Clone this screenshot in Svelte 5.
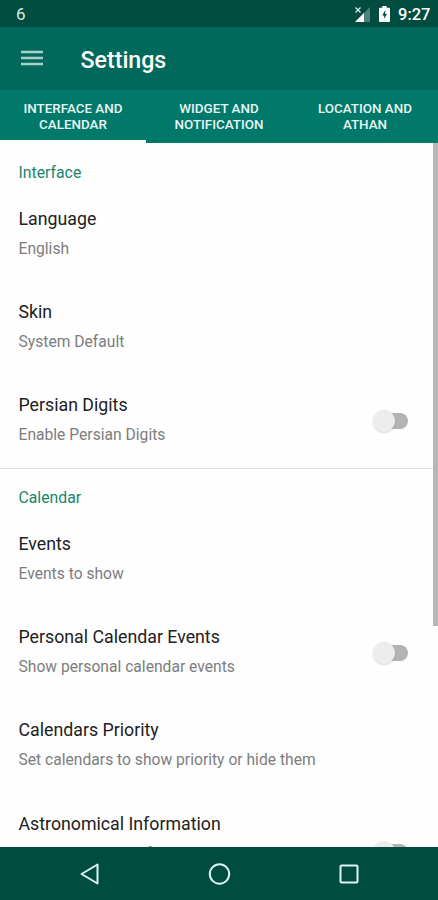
<script>
  const tabs = [['INTERFACE AND', 'CALENDAR'], ['WIDGET AND', 'NOTIFICATION'], ['LOCATION AND', 'ATHAN']];
  const sections = [
    {
      name: 'Interface',
      items: [
        { title: 'Language', summary: 'English' },
        { title: 'Skin', summary: 'System Default' },
        { title: 'Persian Digits', summary: 'Enable Persian Digits', toggle: true }
      ]
    },
    {
      name: 'Calendar',
      items: [
        { title: 'Events', summary: 'Events to show' },
        { title: 'Personal Calendar Events', summary: 'Show personal calendar events', toggle: true },
        { title: 'Calendars Priority', summary: 'Set calendars to show priority or hide them' },
        { title: 'Astronomical Information', summary: 'Show additional information like moon in Scorpio', toggle: true, tall: true }
      ]
    }
  ];
</script>

<div class="screen">
  <header class="status">
    <span class="count">6</span>
    <svg class="signal" width="17" height="17" viewBox="0 0 17 17">
      <path d="M16 1V16H1Z" fill="#4d8278" />
      <path d="M10 7V16H1Z" fill="#fff" />
      <path d="M1.5 1.5l5 5M6.5 1.5l-5 5" stroke="#dce8e5" stroke-width="1.3" />
    </svg>
    <svg class="battery" width="11" height="16" viewBox="0 0 11 16">
      <path d="M3.3 0h4.4v1.8H10q1 0 1 1V15q0 1-1 1H1q-1 0-1-1V2.800q0-1 1-1h2.300z" fill="#fff" />
      <path d="M6.300 4.300L3.200 9.500h2v3.400L7.900 7.900H6.300z" fill="#004d40" />
    </svg>
    <span class="clock">9:27</span>
  </header>

  <div class="appbar">
    <svg width="22" height="16" viewBox="0 0 22 16">
      <path d="M0 2H22M0 8H22M0 14H22" stroke="#a8d0c9" stroke-width="2.400" />
    </svg>
    <h1>Settings</h1>
  </div>

  <nav class="tabs">
    {#each tabs as tab, i}
      <div class="tab" class:active={i === 0}><span>{tab[0]}<br />{tab[1]}</span></div>
    {/each}
  </nav>

  <main>
    {#each sections as section}
      <section>
        <h2>{section.name}</h2>
        {#each section.items as item}
          <div class="row" class:tall={item.tall}>
            <div class="text">
              <div class="title">{item.title}</div>
              <div class="summary">{item.summary}</div>
            </div>
            {#if item.toggle}
              <div class="switch"><i></i></div>
            {/if}
          </div>
        {/each}
      </section>
    {/each}
    <div class="scrollbar"></div>
  </main>

  <footer>
    <div><svg width="22" height="24" viewBox="0 0 22 24"><path d="M18.500 2.500V21.500L2.500 12Z" fill="none" stroke="#e0f2ee" stroke-width="2" stroke-linejoin="round" /></svg></div>
    <div><svg width="24" height="24" viewBox="0 0 24 24"><circle cx="11.500" cy="12" r="9.700" fill="none" stroke="#e0f2ee" stroke-width="2" /></svg></div>
    <div><svg width="20" height="20" viewBox="0 0 20 20"><rect x="1.500" y="1.500" width="17" height="17" rx="1" fill="none" stroke="#e0f2ee" stroke-width="2" /></svg></div>
  </footer>
</div>

<style>
  .screen {
    width: 438px;
    height: 900px;
    display: flex;
    flex-direction: column;
    overflow: hidden;
    background: #fefefe;
    font-family: Roboto, sans-serif;
  }
  .status {
    flex: none;
    height: 27px;
    box-sizing: border-box;
    padding: 1px 9px 0 16px;
    display: flex;
    align-items: center;
    background: #004d40;
    color: #fff;
  }
  .count { flex: 1; font-size: 17px; color: #dbe9e6; }
  .signal { margin-right: 8px; }
  .battery { margin-right: 8px; }
  .clock { padding-top: 1px; font-size: 16.500px; font-weight: 500; line-height: 20px; width: 31px; }
  .appbar {
    flex: none;
    height: 63px;
    box-sizing: border-box;
    display: flex;
    align-items: center;
    padding: 0 0 1px 21px;
    background: #00695c;
    color: #fff;
  }
  .appbar svg { margin-right: 37.500px; }
  h1 { margin: 3px 0 0; font-size: 23.200px; font-weight: 500; line-height: 28px; }
  .tabs {
    flex: none;
    height: 53px;
    display: flex;
    background: #00796b;
  }
  .tab {
    flex: 1;
    box-sizing: border-box;
    padding-top: 11px;
    text-align: center;
    color: #e8f5f3;
    font-size: 13.400px;
    font-weight: 500;
    line-height: 16px;
  }
  .active { border-bottom: 3px solid #fff; }
  main { flex: 1; min-height: 0; overflow: hidden; position: relative; }
  section { box-sizing: border-box; padding: 19px 30px 0 18.500px; }
  section:first-child { height: 326px; padding-top: 20px; border-bottom: 1px solid #e0e0e0; }
  h2 { margin: 0 0 -1px; font-size: 15.800px; font-weight: 400; line-height: 20px; color: #20856c; }
  .row { height: 93.200px; display: flex; box-sizing: border-box; padding-top: 25px; }
  .text { flex: 1; white-space: nowrap; }
  .title { font-size: 17.750px; line-height: 24px; color: #212121; }
  .summary { margin-top: 7px; font-size: 15.650px; line-height: 22px; color: #7d7d7d; }
  .switch {
    position: relative;
    flex: none;
    margin-top: 20px;
    width: 30px;
    height: 16px;
    border-radius: 8px;
    background: #b3b3b3;
  }
  .tall .switch { margin-top: 32px; }
  .switch i {
    position: absolute;
    left: -5px;
    top: -3px;
    width: 22px;
    height: 22px;
    border-radius: 50%;
    background: #ececec;
    box-shadow: 0 1px 2px rgba(0, 0, 0, 0.15);
  }
  .scrollbar { position: absolute; right: 0; top: 0; width: 5px; height: 483px; background: #b7b7b7; }
  footer {
    flex: none;
    height: 53px;
    box-sizing: border-box;
    padding-left: 1px;
    display: flex;
    align-items: center;
    justify-content: center;
    background: #004d40;
  }
  footer div { width: 129.500px; display: flex; justify-content: center; }
</style>
